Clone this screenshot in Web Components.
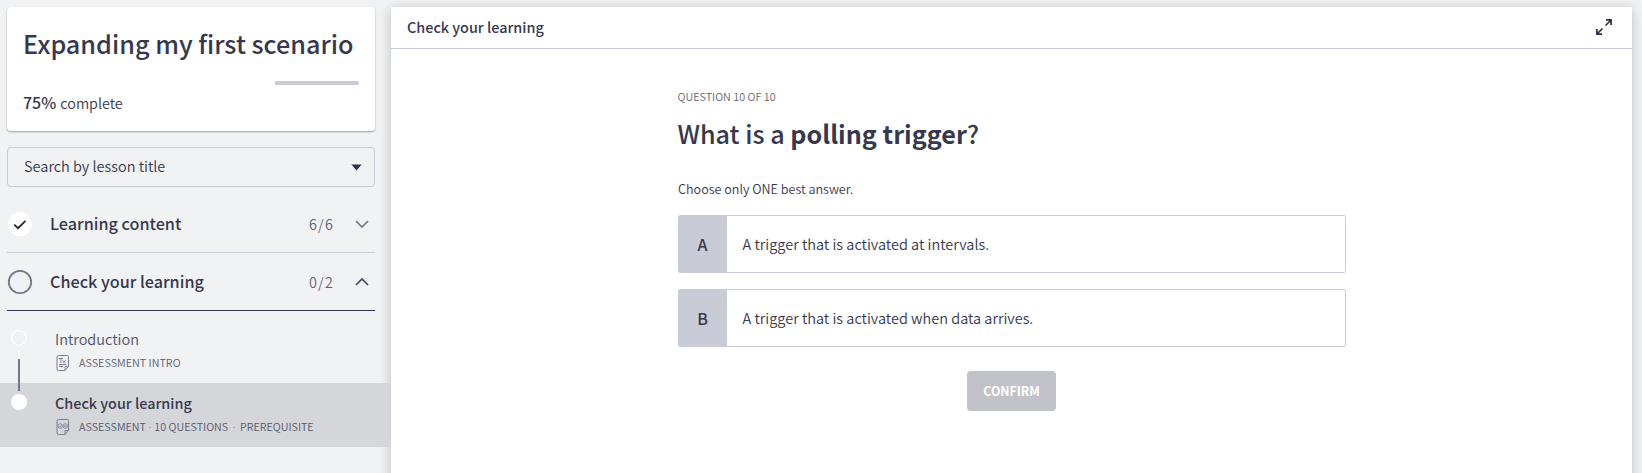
<!DOCTYPE html>
<html lang="en"><head><meta charset="utf-8"><title>Expanding my first scenario</title>
<style>
html,body{margin:0;height:100%;background:#f1f2f4;overflow:hidden}
body{font-family:"Noto Sans CJK SC","Noto Sans",sans-serif;color:#37384e}
</style></head><body>
<learning-app></learning-app>
<script>
function define(name, css, html) {
  const t = document.createElement('template');
  t.innerHTML = `<style>*{box-sizing:border-box}${css}</style>${html}`;
  customElements.define(name, class extends HTMLElement {
    constructor() {
      super();
      this.attachShadow({mode: 'open'}).append(t.content.cloneNode(true));
    }
  });
}

/* One line of text; size, weight and tracking come from its attributes. */
customElements.define('text-line', class extends HTMLElement {
  connectedCallback() {
    if (this.shadowRoot) return;
    const a = n => this.getAttribute(n);
    this.attachShadow({mode: 'open'}).innerHTML = `<style>
      :host{display:block;white-space:pre;width:max-content;font-size:${a('size')}px;font-weight:${a('weight') || 350};
      line-height:${a('line') || 20}px;letter-spacing:${a('track') || 0}px;color:${a('ink') || 'inherit'}}
      </style><slot></slot>`;
  }
});

define('progress-card', `
:host{display:block;box-sizing:border-box;height:124px;background:#fff;border-radius:4px;padding:18px 16px 0 16px;box-shadow:0 1px 2px rgba(0,0,0,.35)}
.bar{height:4px;margin-top:20px;display:flex;justify-content:flex-end}
.bar i{width:84px;background:#c9cbd6;border-radius:0 2px 2px 0}
.done{display:flex;align-items:baseline;gap:4px;margin-top:7px}`,
`<text-line size="25.2" weight="500" line="36">Expanding my first scenario</text-line>
<div class="bar"><i></i></div>
<div class="done"><text-line size="16" weight="500">75%</text-line><text-line size="14.4">complete</text-line></div>`);

define('lesson-search', `
:host{display:flex;box-sizing:border-box;height:40px;border:1px solid #c9cbd6;border-radius:4px;align-items:center;justify-content:space-between;padding:0 12px 0 16px}
text-line{margin-bottom:2px}
`, `<text-line size="14.5">Search by lesson title</text-line>
<svg width="11" height="7"><path d="M.4.5h10.2L5.5 6.5z" fill="#2f3148"/></svg>`);

define('section-row', `
:host{display:flex;box-sizing:border-box;height:58px;align-items:center;border-bottom:1px solid #c9cbd6;padding:1px 6px 0 0}
.title{flex:1;margin:0 0 2px 17px}
.count{margin:0 21px 0 0;color:#5f6177}
::slotted(svg){display:block;flex:none}`,
`<slot name="mark"></slot><div class="title"><slot name="title"></slot></div><div class="count"><slot name="count"></slot></div><slot name="arrow"></slot>`);

define('lesson-item', `
:host{display:flex;box-sizing:border-box;height:64px;padding:10px 0 0 11px;align-items:flex-start}
.rail{width:16px;display:flex;flex-direction:column;align-items:center;margin-top:1px}
.body{margin-left:28px}
.meta{display:flex;align-items:center;gap:9px;margin-top:4px;margin-left:1px}
::slotted(svg){display:block}`,
`<div class="rail"><slot name="dot"></slot></div><div class="body"><slot name="title"></slot><div class="meta"><slot name="icon"></slot><slot name="meta"></slot></div></div>`);

define('course-sidebar', `
:host{display:block;width:391px;flex:none;padding-top:7px}
.in{margin:0 16px 0 7px}
lesson-search{margin-top:16px}
section-row.first{margin-top:8px}
section-row.open{border-bottom-color:#34354f}
.list{padding-top:8px;position:relative}
.sel{background:#d5d6da}
.line{position:absolute;left:18px;top:40px;width:2px;height:40px;background:linear-gradient(#fff 0 8px,#747689 8px)}
.dot{font-family:"Noto Sans",sans-serif;display:inline-block;width:8.4px;text-align:center}
.dot.wide{width:11.8px}
svg{display:block;flex:none}`,
`<div class="in"><progress-card></progress-card><lesson-search></lesson-search>
<section-row class="first">
 <svg slot="mark" width="26" height="26"><circle cx="13" cy="13" r="12" fill="#fff"/><path d="M7.3 13.6l3.7 3.6 7.5-7.4" fill="none" stroke="#222330" stroke-width="1.7"/></svg>
 <text-line slot="title" size="16.2" weight="500">Learning content</text-line>
 <text-line slot="count" size="14.4" track="1.200">6/6</text-line>
 <svg slot="arrow" width="14" height="14"><path d="M1 4l6 6 6-6" fill="none" stroke="#747689" stroke-width="1.7"/></svg>
</section-row>
<section-row class="open">
 <svg slot="mark" width="26" height="26"><circle cx="13" cy="13" r="11.2" fill="none" stroke="#747689" stroke-width="1.8"/></svg>
 <text-line slot="title" size="16.2" weight="500">Check your learning</text-line>
 <text-line slot="count" size="14.4" track="1.200">0/2</text-line>
 <svg slot="arrow" width="14" height="14"><path d="M1 10l6-6 6 6" fill="none" stroke="#45475e" stroke-width="1.7"/></svg>
</section-row></div>
<div class="list">
<lesson-item>
 <svg slot="dot" width="16" height="16"><circle cx="8" cy="8" r="7.4" fill="none" stroke="#fff" stroke-width="1.1"/></svg>
 <text-line slot="title" size="14.5" ink="#4f5168">Introduction</text-line>
 <svg slot="icon" width="14" height="16" fill="none" stroke="#7d7f93"><path d="M2.500.5h9q1 0 1 1v10l-3.500 4h-6.500q-1.500 0-1.500-1.500v-12q0-1.500 1.500-1.500zM12.500 11.500h-3.500v4"/><path d="M2.800 3.500h4.400M5 3.500v4.500M6.800 5.300l2.700 2.700M9.500 5.300l-2.700 2.700M3 9.500h7.500M3 11.500h4"/></svg>
 <text-line slot="meta" size="10.75" track=".03" ink="#5a5c72">ASSESSMENT INTRO</text-line>
</lesson-item>
<lesson-item class="sel">
 <svg slot="dot" width="16" height="16"><circle cx="8" cy="8" r="8" fill="#fff"/></svg>
 <text-line slot="title" size="14.4" weight="500">Check your learning</text-line>
 <svg slot="icon" width="14" height="16" fill="none" stroke="#7d7f93"><path d="M2.500.5h9q1 0 1 1v10l-3.500 4h-6.500q-1.500 0-1.500-1.500v-12q0-1.500 1.500-1.500zM12.500 11.500h-3.500v4"/><g stroke-width=".8"><circle cx="4.300" cy="7" r="2.300"/><circle cx="9.300" cy="7" r="2.300"/><path d="M3.200 7l.9.900 1.500-1.700M8.400 6.100l1.800 1.800M10.200 6.100l-1.800 1.800"/></g></svg>
 <text-line slot="meta" size="10.75" track=".01" ink="#55576c">ASSESSMENT<span class="dot">·</span>10 QUESTIONS<span class="dot wide">·</span>PREREQUISITE</text-line>
</lesson-item>
<div class="line"></div></div>`);

define('answer-option', `
:host{display:flex;box-sizing:border-box;height:58px;border:1px solid #c9cbd6;border-radius:2px;align-items:center}
.key{width:48px;height:100%;background:#c9cbd6;display:flex;align-items:center;justify-content:center;margin-right:15.5px;padding-right:1px}`,
`<div class="key"><slot name="key"></slot></div><slot></slot>`);

define('confirm-button', `
:host{display:flex;box-sizing:border-box;width:89px;height:40px;border-radius:4px;background:#c2c3c9;align-items:center;justify-content:center}`,
`<text-line size="12.3" weight="700" ink="#fff">CONFIRM</text-line>`);

define('lesson-panel', `
:host{display:block;flex:none;width:1241px;height:480px;margin-top:7px;background:#fff;box-shadow:0 2px 12px rgba(0,0,0,.22)}
header{height:42px;border-bottom:1px solid #c9cbd6;display:flex;align-items:center;justify-content:space-between;padding:0 20px 0 16px}
header text-line,header svg{margin-bottom:2px}
main{width:668px;margin-left:287px;padding-top:38px}
.h{display:flex;margin-top:8px}
.c{margin-top:28px;margin-bottom:16px}
.h,.q{margin-left:-.5px}
answer-option{margin-bottom:16px}
confirm-button{margin:24px auto 0 289px}`,
`<header><text-line size="14.4" weight="500">Check your learning</text-line>
<svg width="16" height="16" fill="none" stroke="#2f3148" stroke-width="1.700"><path d="M9.500 6.500l5-5M10 .9h5.100V6M6.500 9.500l-5 5M.9 10v5.100H6"/></svg></header>
<main><text-line class="q" size="10.75" track=".03" ink="#63656f">QUESTION 10 OF 10</text-line>
<div class="h"><text-line size="25.150" weight="500" line="36">What is a </text-line><text-line size="25.150" weight="700" line="36">polling trigger</text-line><text-line size="25.150" weight="500" line="36">?</text-line></div>
<text-line class="c" size="12.600">Choose only ONE best answer.</text-line>
<answer-option><text-line slot="key" size="16" weight="500">A</text-line><text-line size="14.5">A trigger that is activated at intervals.</text-line></answer-option>
<answer-option><text-line slot="key" size="16" weight="500">B</text-line><text-line size="14.5">A trigger that is activated when data arrives.</text-line></answer-option>
<confirm-button></confirm-button></main>`);

define('learning-app', `:host{display:flex;align-items:flex-start;height:473px;width:1642px;overflow:hidden}`,
`<course-sidebar></course-sidebar><lesson-panel></lesson-panel>`);
</script></body></html>
